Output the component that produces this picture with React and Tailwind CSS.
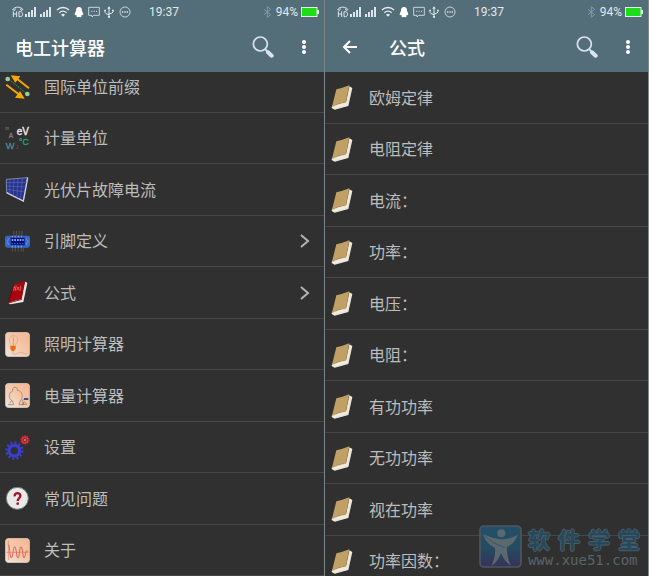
import React from 'react';

const ICON = "w-[25px] h-[25px] shrink-0";

function PrefixIcon () {
  return (
    <svg className={ICON} viewBox="0 0 75 75">
      <path d="M12 16 L66 60" stroke="#4f9a62" strokeWidth="3" strokeDasharray="4 3" />
      <circle cx="8" cy="15" r="7" fill="#93cf9c" />
      <circle cx="67" cy="60" r="7" fill="#93cf9c" />
      <path d="M72 43 L34 13 M4 32 L44 63" stroke="#f6a800" strokeWidth="6" />
      <path d="M17 4 L46 7 L31 26 Z M59 74 L30 71 L45 51 Z" fill="#f9a900" />
    </svg>
  );
}

function UnitsIcon () {
  return (
    <svg className={ICON} viewBox="0 0 75 75" fontFamily="Liberation Sans, sans-serif">
      <text x="35" y="27" fontSize="30" fill="#f2f2f2" stroke="#f2f2f2">eV</text>
      <text x="1" y="13" fontSize="14" fill="#7f9566">m</text>
      <text x="11" y="36" fontSize="20" fill="#8a7474" stroke="#8a7474">A</text>
      <text x="2" y="68" fontSize="28" fill="#4b8a88" stroke="#4b8a88">W</text>
      <text x="42" y="58" fontSize="26" fill="#1fa27a" stroke="#1fa27a">°C</text>
      <text x="33" y="68" fontSize="14" fill="#8a5560">J</text>
    </svg>
  );
}

function SolarIcon () {
  return (
    <svg className={ICON} viewBox="0 0 75 75">
      <path d="M4 7 L68 2 L55 72 L5 47 Z" fill="#27328c" stroke="#aab2c4" strokeWidth="2" />
      <path d="M68 2 L55 72 L5 47" stroke="#cfd5de" strokeWidth="4" fill="none" />
      <path d="M4 17 L66 16 M5 27 L64 30 M5 37 L60 45 M15 7 L14 50 M27 6 L25 56 M39 5 L36 62 M52 4 L46 66" stroke="#5a68b8" strokeWidth="2" />
    </svg>
  );
}

function PinoutIcon () {
  return (
    <svg className={ICON} viewBox="0 0 75 75">
      <path d="M27 6 V20 M35 6 V20 M43 6 V20 M51 6 V20 M22 56 V68 M31 56 V68 M40 56 V68 M49 56 V68 M55 56 V68" stroke="#666" strokeWidth="2" />
      <rect x="0" y="20" width="75" height="36" rx="7" fill="#3768c4" />
      <path d="M12 28 L6 38 L12 48 M63 28 L69 38 L63 48" stroke="#5f8fdc" strokeWidth="3" fill="none" />
      <rect x="17" y="26" width="42" height="23" fill="#06137a" />
      <path d="M20 33 H56" stroke="#b9d2ff" strokeWidth="4" strokeDasharray="5 3" />
      <path d="M20 44 H56" stroke="#4f7ad8" strokeWidth="4" strokeDasharray="3 5" />
      <path d="M22 20 V26 M31 20 V26 M40 20 V26 M49 20 V26 M22 49 V56 M31 49 V56 M40 49 V56 M49 49 V56" stroke="#9dbcf0" strokeWidth="2" />
    </svg>
  );
}

function RedBookIcon () {
  return (
    <svg className={ICON} viewBox="0 0 75 75">
      <path d="M59 4 L67 9 L55 66 L16 73 L9 68 L50 55 Z" fill="#efe9e4" />
      <path d="M27 12 Q44 9 61 2 L50 57 Q30 60 10 68 Z" fill="#a80510" />
      <path d="M27 12 L10 68" stroke="#5c0007" strokeWidth="2" />
      <text x="25" y="29" fontSize="17" fontStyle="italic" fontFamily="Liberation Serif, serif" fill="#f0b9b9">f(x)</text>
      <path d="M10 68 L50 57 L51 59 L12 70 Z" fill="#6b0008" />
    </svg>
  );
}

function BookIcon () {
  return (
    <svg className={ICON} viewBox="0 0 75 75">
      <path d="M58 4 L67 9 L55 63 L14 74 L5 69 L6 62 L48 50 Z" fill="#f1ece0" />
      <path d="M19 13 Q38 9 58 1 L48 52 Q26 54 6 65 Z" fill="#c0a065" />
      <path d="M58 2 L48 52 Q26 54 7 65" stroke="#967a49" strokeWidth="1" fill="none" />
      <path d="M64 12 L53 61 L16 71" stroke="#d5cfc0" strokeWidth="1" fill="none" />
    </svg>
  );
}

function Tile ({children}) {
  return (
    <svg className={ICON} viewBox="0 0 75 75">
      <defs>
        <linearGradient id="peach" x1="1" y1="0" x2="0" y2="1">
          <stop offset="0" stopColor="#f4b48e" />
          <stop offset="0.5" stopColor="#f5c8ab" />
          <stop offset="1" stopColor="#eee6df" />
        </linearGradient>
      </defs>
      <rect x="1" y="1" width="73" height="73" rx="11" fill="url(#peach)" stroke="#d5cdc6" strokeWidth="2" />
      {children}
    </svg>
  );
}

function LampIcon () {
  return (
    <Tile>
      <path d="M19 43 C16 32 11 28 13 20 C17 8 35 8 38 20 C40 29 31 34 30 43" stroke="#e0a077" strokeWidth="2" fill="none" />
      <path d="M25 16 V42" stroke="#f07a2a" strokeWidth="2" />
      <path d="M16 41 H32 V50 L27 58 H21 L16 50 Z" fill="#f26a10" />
      <path d="M24 58 V66 C36 72 40 56 52 62 S62 66 68 64" stroke="#c2a08c" strokeWidth="2" fill="none" />
    </Tile>
  );
}

function MotorIcon () {
  return (
    <Tile>
      <path d="M9 65 H26 L23 55 C10 48 9 30 23 24 V17 L30 12 L37 17 V22 C53 24 56 43 46 54 L42 65 H57 L52 53 L60 46" stroke="#8b7468" strokeWidth="2" fill="none" />
      <path d="M14 62 L20 52" stroke="#8b7468" strokeWidth="2" />
      <path d="M57 48 H70" stroke="#31538e" strokeWidth="6" />
      <path d="M50 64 L58 56 L65 64 Z" fill="none" stroke="#8b7468" strokeWidth="2" />
    </Tile>
  );
}

function WaveIcon () {
  return (
    <Tile>
      <path d="M10 8 V66 M4 43 H71" stroke="#e87960" strokeWidth="2" />
      <path d="M10 20 C14 20 14 60 19 60 S24 26 29 26 S34 60 39 60 S43 26 48 26 S53 60 57 60 S62 30 68 40" stroke="#e65c4a" strokeWidth="3" fill="none" />
    </Tile>
  );
}

function GearsIcon () {
  return (
    <svg className={ICON} viewBox="0 0 75 75">
      <circle cx="28" cy="47" r="16" fill="none" stroke="#3a3fd0" strokeWidth="10" />
      <circle cx="28" cy="47" r="24" fill="none" stroke="#3a3fd0" strokeWidth="7" strokeDasharray="6 6.57" />
      <circle cx="60" cy="15" r="8" fill="none" stroke="#dd2d35" strokeWidth="6" />
      <circle cx="60" cy="15" r="12" fill="none" stroke="#dd2d35" strokeWidth="4" strokeDasharray="3.8 3.74" />
      <circle cx="60" cy="15" r="3" fill="#e88" />
    </svg>
  );
}

function HelpIcon () {
  return (
    <svg className={ICON} viewBox="0 0 75 75">
      <circle cx="37" cy="37" r="33" fill="#e9e9e9" stroke="#6d7676" strokeWidth="3" />
      <path d="M29 31 C28 18 47 19 46 30 C45 37 38 37 38 45" stroke="#a3121d" strokeWidth="7" fill="none" />
      <circle cx="38" cy="53" r="4" fill="#a3121d" />
    </svg>
  );
}

const menu = [
  { title: '国际单位前缀', icon: <PrefixIcon /> },
  { title: '计量单位', icon: <UnitsIcon /> },
  { title: '光伏片故障电流', icon: <SolarIcon /> },
  { title: '引脚定义', icon: <PinoutIcon />, more: true },
  { title: '公式', icon: <RedBookIcon />, more: true },
  { title: '照明计算器', icon: <LampIcon /> },
  { title: '电量计算器', icon: <MotorIcon /> },
  { title: '设置', icon: <GearsIcon /> },
  { title: '常见问题', icon: <HelpIcon /> },
  { title: '关于', icon: <WaveIcon /> },
];

const formulas = [
  '欧姆定律', '电阻定律', '电流：', '功率：', '电压：',
  '电阻：', '有功功率', '无功功率', '视在功率', '功率因数：',
].map((title) => ({ title, icon: <BookIcon /> }));

function Bars () {
  return (
    <svg className="w-3 h-3" viewBox="0 0 12 12" fill="#dfe6e9">
      <path d="M0 8h2v3H0zM3 6h2v5H3zM6 4h2v7H6z" />
      <path d="M9 1h2v10H9z" />
    </svg>
  );
}

function StatusBar () {
  return (
    <div className="flex items-center h-[23px] pl-3 pr-[5px] font-[Roboto,sans-serif] text-xs text-[#e3e9ec]">
      <svg className="w-3 h-3" viewBox="0 0 36 36" fill="none" stroke="#dfe6e9" strokeWidth="3">
        <path d="M2 11 C8 1 27 1 33 11 L27 13 L25 8 M10 8 L8 13 L2 11" />
        <path d="M4 16 V33 M14 16 V33 M4 24 H14 M21 17 V32 H25 C34 32 34 17 25 17 Z" />
      </svg>
      <div className="flex gap-[3px] ml-px">
        <Bars />
        <Bars />
      </div>
      <svg className="w-[14px] h-3 ml-1" viewBox="0 0 42 36" fill="none" stroke="#e6ecee" strokeWidth="4">
        <path d="M3 12 C13 2 29 2 39 12 M10 20 C17 14 25 14 32 20" />
        <path d="M15 26 Q21 21 27 26 L21 32 Z" fill="#e6ecee" stroke="none" />
      </svg>
      <svg className="w-[10px] h-3 ml-1" viewBox="0 0 30 36" fill="#fff">
        <path d="M15 3 C7 3 6 10 6 15 C3 20 1 25 3 28 L6 26 L9 31 C5 33 8 34 15 33 C22 34 25 33 21 31 L24 26 L27 28 C29 25 27 20 24 15 C24 10 23 3 15 3 Z" />
      </svg>
      <svg className="w-3 h-3 ml-1" viewBox="0 0 36 36" fill="none" stroke="#dfe6e9" strokeWidth="2.500">
        <path d="M2 4 H34 V28 H17 L12 33 V28 H2 Z" />
        <path d="M10 16 H13 M17 16 H20 M24 16 H27" strokeWidth="3" />
      </svg>
      <svg className="w-[10px] h-3 ml-1" viewBox="0 0 30 36" fill="none" stroke="#e6ecee" strokeWidth="3">
        <path d="M15 4 V32 M3 13 V19 Q4 24 15 26 M27 13 V18 Q26 22 15 24" />
        <path d="M15 1 L20 8 H10 Z M12 30 H18 V35 H12 Z M1 11 H6 V15 H1 Z M24 11 H29 V15 H24 Z" fill="#e6ecee" stroke="none" />
      </svg>
      <svg className="w-3 h-3 ml-[5px]" viewBox="0 0 36 36" fill="none" stroke="#dfe6e9" strokeWidth="2.500">
        <circle cx="18" cy="18" r="15" />
        <path d="M9 18 H13 M16 18 H20 M23 18 H27" strokeWidth="4" />
      </svg>
      <span className="ml-[18px]">19:37</span>
      <svg className="w-[9px] h-3 ml-auto" viewBox="0 0 27 36" fill="none" stroke="#8799a1" strokeWidth="3">
        <path d="M3 10 L23 26 L13 34 V2 L23 10 L3 26" />
      </svg>
      <span className="ml-1">94%</span>
      <svg className="w-[18px] h-[10px] ml-[3px]" viewBox="0 0 18 10">
        <rect x="0.500" y="0.500" width="15.500" height="9" fill="#1fdc1b" stroke="#e4ebe6" />
        <path d="M16 3h2v4h-2z" fill="#e4ebe6" />
      </svg>
    </div>
  );
}

function Header ({title, back}) {
  return (
    <header className="relative z-10 shrink-0 bg-[#546e79] text-white">
      <StatusBar />
      <div className="flex items-center h-[49px] pl-[15px] pr-3 pb-0.5">
        {back && (
          <button type="button" aria-label="返回" className="mr-[29px]">
            <svg className="w-5 h-5" viewBox="0 0 20 20" fill="none" stroke="#fff" strokeWidth="2">
              <path d="M17 10 H4 M10 4 L4 10 L10 16" />
            </svg>
          </button>
        )}
        <h1 className="text-lg font-medium">{title}</h1>
        <button type="button" aria-label="搜索" className="ml-auto">
          <svg className="w-[22px] h-[22px]" viewBox="0 0 66 66" fill="none" stroke="#dbe4ee">
            <circle cx="25" cy="24" r="21" strokeWidth="5" />
            <path d="M40 40 L47 47" strokeWidth="6" />
            <path d="M48 49 L59 59" strokeWidth="12" strokeLinecap="round" />
          </svg>
        </button>
        <button type="button" aria-label="更多" className="ml-[22px]">
          <svg className="w-4 h-4" viewBox="0 0 16 16" fill="#fff">
            <circle cx="8" cy="3" r="2" />
            <circle cx="8" cy="8" r="2" />
            <circle cx="8" cy="13" r="2" />
          </svg>
        </button>
      </div>
    </header>
  );
}

function Row ({item}) {
  return (
    <li className="h-13 even:h-[51px] border-b border-[#474747]">
      <a href="#" className="flex items-center h-full pl-[5px] pr-[13px]">
        {item.icon}
        <span className="ml-[14px] pb-0.5">{item.title}</span>
        {item.more && (
          <svg className="w-3 h-4 ml-auto" viewBox="0 0 12 16" fill="none" stroke="#b4b4b4" strokeWidth="2">
            <path d="M2 2 L9 8 L2 14" />
          </svg>
        )}
      </a>
    </li>
  );
}

function Watermark () {
  return (
    <div className="absolute right-2 bottom-2 flex items-center gap-[6px] pointer-events-none">
      <svg className="w-[43px] h-[43px]" viewBox="0 0 129 129">
        <defs>
          <linearGradient id="mark" x1="0" y1="0" x2="0" y2="1">
            <stop offset="0" stopColor="#22506a" />
            <stop offset="0.500" stopColor="#234c61" />
            <stop offset="1" stopColor="#38315a" />
          </linearGradient>
        </defs>
        <rect x="3" y="3" width="123" height="123" rx="12" fill="url(#mark)" stroke="#4c575e" strokeWidth="5" />
        <circle cx="67" cy="25" r="12" fill="#5b686e" />
        <path d="M12 28 C30 34 46 42 66 43 C88 42 102 37 116 29 C110 48 98 59 84 66 C82 84 88 104 95 122 C80 112 72 98 66 84 C60 100 52 113 38 122 C46 103 50 84 48 69 C30 60 18 47 12 28 Z" fill="#5b686e" />
        <path d="M14 29 C32 48 54 60 78 68" stroke="#2a5364" strokeWidth="2" fill="none" />
      </svg>
      <div className="text-[#24485c]">
        <div className="flex gap-2 text-[22px] leading-7 font-bold [text-shadow:1px_0_#4d5b64,-1px_0_#4d5b64,0_1px_#4d5b64,0_-1px_#4d5b64]">
          <span>软</span>
          <span>件</span>
          <span>学</span>
          <span>堂</span>
        </div>
        <div className="font-['DejaVu_Sans_Mono',monospace] text-sm leading-4 text-[#59646a]">www.xue51.com</div>
      </div>
    </div>
  );
}

function App () {
  return (
    <div
      lang="zh-CN"
      className="grid grid-cols-2 h-screen overflow-hidden border-r border-[#7d8a90] bg-[#303030] text-base text-[#bdbdbd] font-['Noto_Sans_CJK_SC',sans-serif]"
    >
      <section className="flex flex-col min-w-0 min-h-0 overflow-hidden">
        <Header title="电工计算器" />
        {/* scrolled a little, first row goes under the header */}
        <ul className="-mt-[11px]">
          {menu.map((item) => <Row key={item.title} item={item} />)}
        </ul>
      </section>
      <section className="relative flex flex-col min-w-0 min-h-0 overflow-hidden border-l border-[#7b868b]">
        <Header title="公式" back />
        <ul>
          {formulas.map((item) => <Row key={item.title} item={item} />)}
        </ul>
        <Watermark />
      </section>
    </div>
  );
}

export default App;
